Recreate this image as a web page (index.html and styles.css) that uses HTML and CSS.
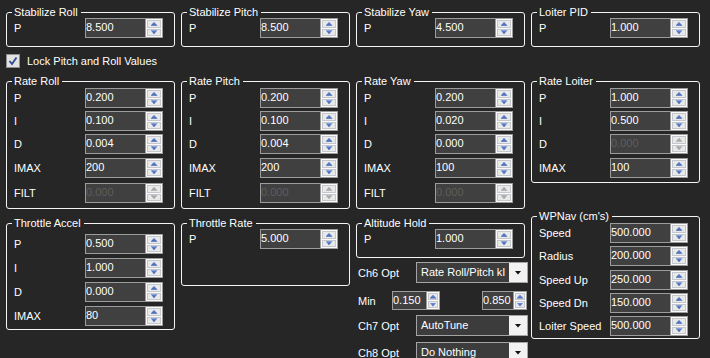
FILE: index.html
```html
<!DOCTYPE html>
<html lang="en">

<head>
    <meta charset="utf-8">
    <title>Tuning</title>
    <link rel="stylesheet" href="styles.css">
</head>

<body>
    <div class="panel">

        <!-- stabilize row -->
        <div class="grid">
            <fieldset class="grp stab">
                <legend>Stabilize Roll</legend>
                <div class="row"><span class="lbl">P</span>
                    <div class="num"><span class="val">8.500</span><span class="spin"><i class="up"></i><i class="dn"></i></span></div>
                </div>
            </fieldset>
            <fieldset class="grp stab">
                <legend>Stabilize Pitch</legend>
                <div class="row"><span class="lbl">P</span>
                    <div class="num"><span class="val">8.500</span><span class="spin"><i class="up"></i><i class="dn"></i></span></div>
                </div>
            </fieldset>
            <fieldset class="grp stab">
                <legend>Stabilize Yaw</legend>
                <div class="row"><span class="lbl">P</span>
                    <div class="num"><span class="val">4.500</span><span class="spin"><i class="up"></i><i class="dn"></i></span></div>
                </div>
            </fieldset>
            <fieldset class="grp stab">
                <legend>Loiter PID</legend>
                <div class="row"><span class="lbl">P</span>
                    <div class="num"><span class="val">1.000</span><span class="spin"><i class="up"></i><i class="dn"></i></span></div>
                </div>
            </fieldset>
        </div>

        <label class="chk">
            <svg width="14" height="14" viewBox="0 0 14 14">
                <rect x="0.5" y="0.5" width="13" height="13" fill="#e2e2e2" stroke="#8e8e8e"/>
                <path d="M3.5 7 L6 10 L10.5 3.5" fill="none" stroke="#2f4a8c" stroke-width="1.8"/>
            </svg>
            <span>Lock Pitch and Roll Values</span>
        </label>

        <!-- rate row -->
        <div class="grid rates">
            <fieldset class="grp rate">
                <legend>Rate Roll</legend>
                <div class="row"><span class="lbl">P</span>
                    <div class="num"><span class="val">0.200</span><span class="spin"><i class="up"></i><i class="dn"></i></span></div>
                </div>
                <div class="row"><span class="lbl">I</span>
                    <div class="num"><span class="val">0.100</span><span class="spin"><i class="up"></i><i class="dn"></i></span></div>
                </div>
                <div class="row"><span class="lbl">D</span>
                    <div class="num"><span class="val">0.004</span><span class="spin"><i class="up"></i><i class="dn"></i></span></div>
                </div>
                <div class="row imax"><span class="lbl">IMAX</span>
                    <div class="num"><span class="val">200</span><span class="spin"><i class="up"></i><i class="dn"></i></span></div>
                </div>
                <div class="row filt"><span class="lbl">FILT</span>
                    <div class="num off"><span class="val">0.000</span><span class="spin"><i class="up"></i><i class="dn"></i></span></div>
                </div>
            </fieldset>
            <fieldset class="grp rate">
                <legend>Rate Pitch</legend>
                <div class="row"><span class="lbl">P</span>
                    <div class="num"><span class="val">0.200</span><span class="spin"><i class="up"></i><i class="dn"></i></span></div>
                </div>
                <div class="row"><span class="lbl">I</span>
                    <div class="num"><span class="val">0.100</span><span class="spin"><i class="up"></i><i class="dn"></i></span></div>
                </div>
                <div class="row"><span class="lbl">D</span>
                    <div class="num"><span class="val">0.004</span><span class="spin"><i class="up"></i><i class="dn"></i></span></div>
                </div>
                <div class="row imax"><span class="lbl">IMAX</span>
                    <div class="num"><span class="val">200</span><span class="spin"><i class="up"></i><i class="dn"></i></span></div>
                </div>
                <div class="row filt"><span class="lbl">FILT</span>
                    <div class="num off"><span class="val">0.000</span><span class="spin"><i class="up"></i><i class="dn"></i></span></div>
                </div>
            </fieldset>
            <fieldset class="grp rate">
                <legend>Rate Yaw</legend>
                <div class="row"><span class="lbl">P</span>
                    <div class="num"><span class="val">0.200</span><span class="spin"><i class="up"></i><i class="dn"></i></span></div>
                </div>
                <div class="row"><span class="lbl">I</span>
                    <div class="num"><span class="val">0.020</span><span class="spin"><i class="up"></i><i class="dn"></i></span></div>
                </div>
                <div class="row"><span class="lbl">D</span>
                    <div class="num"><span class="val">0.000</span><span class="spin"><i class="up"></i><i class="dn"></i></span></div>
                </div>
                <div class="row imax"><span class="lbl">IMAX</span>
                    <div class="num"><span class="val">100</span><span class="spin"><i class="up"></i><i class="dn"></i></span></div>
                </div>
                <div class="row filt"><span class="lbl">FILT</span>
                    <div class="num off"><span class="val">0.000</span><span class="spin"><i class="up"></i><i class="dn"></i></span></div>
                </div>
            </fieldset>
            <fieldset class="grp rate loiter">
                <legend>Rate Loiter</legend>
                <div class="row"><span class="lbl">P</span>
                    <div class="num"><span class="val">1.000</span><span class="spin"><i class="up"></i><i class="dn"></i></span></div>
                </div>
                <div class="row"><span class="lbl">I</span>
                    <div class="num"><span class="val">0.500</span><span class="spin"><i class="up"></i><i class="dn"></i></span></div>
                </div>
                <div class="row"><span class="lbl">D</span>
                    <div class="num off"><span class="val">0.000</span><span class="spin"><i class="up"></i><i class="dn"></i></span></div>
                </div>
                <div class="row imax"><span class="lbl">IMAX</span>
                    <div class="num"><span class="val">100</span><span class="spin"><i class="up"></i><i class="dn"></i></span></div>
                </div>
            </fieldset>
        </div>

        <!-- bottom row -->
        <div class="grid lower">
            <fieldset class="grp accel">
                <legend>Throttle Accel</legend>
                <div class="row"><span class="lbl">P</span>
                    <div class="num"><span class="val">0.500</span><span class="spin"><i class="up"></i><i class="dn"></i></span></div>
                </div>
                <div class="row"><span class="lbl">I</span>
                    <div class="num"><span class="val">1.000</span><span class="spin"><i class="up"></i><i class="dn"></i></span></div>
                </div>
                <div class="row"><span class="lbl">D</span>
                    <div class="num"><span class="val">0.000</span><span class="spin"><i class="up"></i><i class="dn"></i></span></div>
                </div>
                <div class="row"><span class="lbl">IMAX</span>
                    <div class="num"><span class="val">80</span><span class="spin"><i class="up"></i><i class="dn"></i></span></div>
                </div>
            </fieldset>

            <fieldset class="grp single thr">
                <legend>Throttle Rate</legend>
                <div class="row"><span class="lbl">P</span>
                    <div class="num"><span class="val">5.000</span><span class="spin"><i class="up"></i><i class="dn"></i></span></div>
                </div>
            </fieldset>

            <div class="stack">
                <fieldset class="grp single">
                    <legend>Altitude Hold</legend>
                    <div class="row"><span class="lbl">P</span>
                        <div class="num"><span class="val">1.000</span><span class="spin"><i class="up"></i><i class="dn"></i></span></div>
                    </div>
                </fieldset>

                <div class="opt ch6">
                    <span class="olbl">Ch6 Opt</span>
                    <div class="combo"><span class="txt">Rate Roll/Pitch kI</span><span class="arr"></span></div>
                </div>
                <div class="opt minmax">
                    <span class="mlbl">Min</span>
                    <div class="num sm"><span class="val">0.150</span><span class="spin"><i class="up"></i><i class="dn"></i></span></div>
                    <div class="num sm max"><span class="val">0.850</span><span class="spin"><i class="up"></i><i class="dn"></i></span></div>
                </div>
                <div class="opt ch7">
                    <span class="olbl">Ch7 Opt</span>
                    <div class="combo"><span class="txt">AutoTune</span><span class="arr"></span></div>
                </div>
                <div class="opt ch8">
                    <span class="olbl">Ch8 Opt</span>
                    <div class="combo"><span class="txt">Do Nothing</span><span class="arr"></span></div>
                </div>
            </div>

            <fieldset class="grp wpnav">
                <legend>WPNav (cm's)</legend>
                <div class="row"><span class="lbl">Speed</span>
                    <div class="num"><span class="val">500.000</span><span class="spin"><i class="up"></i><i class="dn"></i></span></div>
                </div>
                <div class="row"><span class="lbl">Radius</span>
                    <div class="num"><span class="val">200.000</span><span class="spin"><i class="up"></i><i class="dn"></i></span></div>
                </div>
                <div class="row wide"><span class="lbl">Speed Up</span>
                    <div class="num"><span class="val">250.000</span><span class="spin"><i class="up"></i><i class="dn"></i></span></div>
                </div>
                <div class="row"><span class="lbl">Speed Dn</span>
                    <div class="num"><span class="val">150.000</span><span class="spin"><i class="up"></i><i class="dn"></i></span></div>
                </div>
                <div class="row"><span class="lbl">Loiter Speed</span>
                    <div class="num"><span class="val">500.000</span><span class="spin"><i class="up"></i><i class="dn"></i></span></div>
                </div>
            </fieldset>
        </div>

    </div>
</body>

</html>
```

FILE: styles.css
```css
html,
body {
    margin: 0;
    height: 100%;
    overflow: hidden;
    background-color: #262626;
}

body {
    font-family: "Liberation Sans", Arial, sans-serif;
    font-size: 11px;
    color: #ffffff;
}

.panel {
    padding: 6px 0 0 6px;
}

.grid {
    display: grid;
    grid-template-columns: repeat(4, 169px);
    column-gap: 6px;
    align-items: start;
}

/* group boxes */
.grp {
    margin: 0;
    padding: 0 11px 8px 7px;
    border: 1px solid #f4f4f4;
    border-radius: 3px;
    min-width: 0;
}

.grp legend {
    margin-left: -2px;
    padding: 0 3px 0 2px;
    line-height: 13px;
}

.row {
    display: flex;
    align-items: center;
    height: 20px;
    margin-top: 3px;
}

.grp > .row:first-of-type {
    margin-top: 0;
}

.stab > .row:first-of-type,
.single > .row:first-of-type {
    margin-top: -1px;
}

.lbl {
    width: 71px;
    flex: none;
    white-space: nowrap;
}

/* numeric up/down */
.num {
    display: flex;
    height: 20px;
}

.val {
    width: 61px;
    box-sizing: border-box;
    border: 1px solid #9c9c9c;
    background-color: #404040;
    line-height: 17px;
    white-space: nowrap;
    overflow: hidden;
}

.spin {
    width: 17px;
    box-sizing: border-box;
    display: flex;
    flex-direction: column;
    gap: 1px;
    padding: 1px;
    border: 1px solid #9c9c9c;
    border-left: 0;
    background-color: #fafafa;
}

.spin i {
    flex: 1;
    display: flex;
    align-items: center;
    justify-content: center;
    background-color: #e9e9e9;
    border: 1px solid #c4c7cc;
}

.spin i::after {
    content: "";
    width: 7px;
    height: 4px;
    background: linear-gradient(#6f8fd8, #3a5fb4);
}

.spin .up::after {
    clip-path: polygon(50% 0, 100% 100%, 0 100%);
}

.spin .dn::after {
    clip-path: polygon(0 0, 100% 0, 50% 100%);
}

.off .val {
    color: #5e5e5e;
}

.off .spin i::after {
    background: #a9a9a9;
}

/* check box */
.chk {
    display: flex;
    align-items: center;
    gap: 7px;
    height: 14px;
    margin-top: 7px;
}

.chk svg {
    display: block;
}

/* rate groups */
.rates {
    margin-top: 7px;
}

.rate {
    padding-bottom: 5px;
}

.rate .imax {
    margin-top: 4px;
}

.rate .filt {
    margin-top: 5px;
}

.loiter {
    padding-bottom: 4px;
}

/* lower groups */
.lower {
    margin-top: 8px;
}

.accel {
    padding-bottom: 3px;
}

.accel > .row {
    margin-top: 4px;
}

.accel > .row:first-of-type {
    margin-top: 4px;
}

.thr {
    padding-bottom: 36px;
}

.wpnav {
    margin-top: -7px;
    padding-bottom: 2px;
}

.wpnav .wide {
    margin-top: 4px;
}

/* channel options */
.stack {
    display: flex;
    flex-direction: column;
}

.opt {
    display: flex;
    align-items: center;
    padding-left: 2px;
}

.ch6 {
    margin-top: 4px;
}

.minmax {
    margin-top: 8px;
}

.ch7 {
    margin-top: 5px;
}

.ch8 {
    margin-top: 6px;
}

.olbl {
    width: 58px;
    flex: none;
}

.mlbl {
    width: 34px;
    flex: none;
}

.combo {
    display: flex;
    width: 112px;
    height: 21px;
    flex: none;
    box-sizing: border-box;
    border: 1px solid #a4a4a4;
    background-color: #3c3c3c;
}

.combo .txt {
    flex: 1;
    padding-left: 4px;
    line-height: 19px;
    white-space: nowrap;
    overflow: hidden;
}

.combo .arr {
    width: 18px;
    display: flex;
    align-items: center;
    justify-content: center;
    background-color: #f2f2f2;
}

.combo .arr::after {
    content: "";
    width: 7px;
    height: 4px;
    background-color: #111111;
    clip-path: polygon(0 0, 100% 0, 50% 100%);
}

.num.sm {
    height: 19px;
}

.num.sm .val {
    width: 35px;
}

.num.sm .spin {
    width: 13px;
}

.num.sm.max {
    margin-left: 42px;
}

.num.sm.max .val {
    width: 32px;
}
```
